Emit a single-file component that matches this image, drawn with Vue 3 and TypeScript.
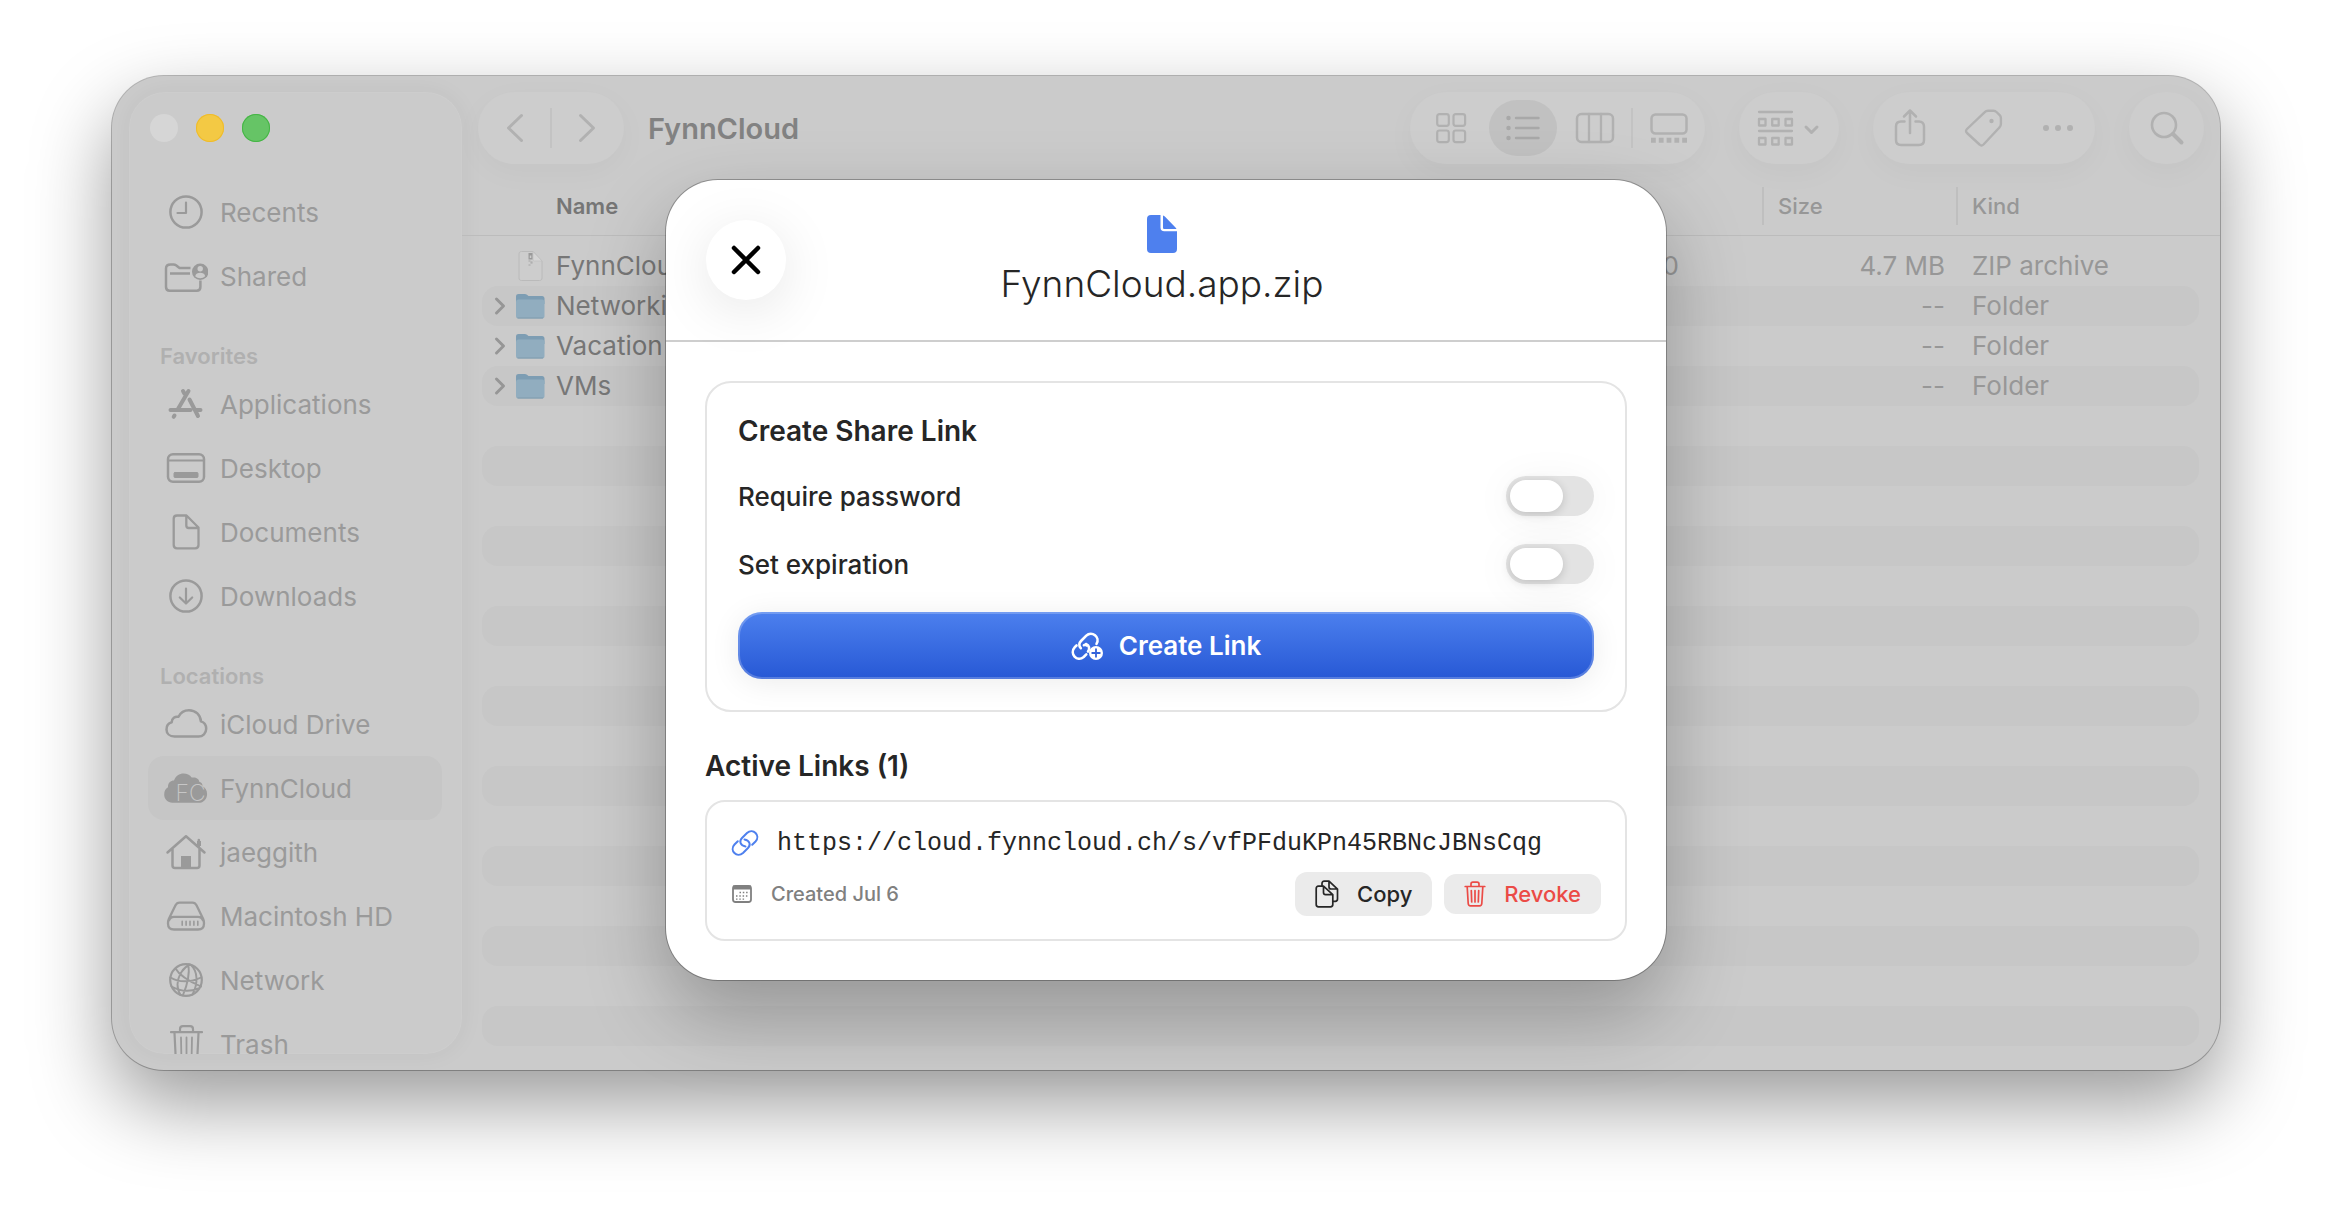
<script setup lang="ts">
import { ref } from 'vue'

interface Place { name: string; icon: string; active?: boolean }
interface Section { title?: string; places: Place[] }
interface Entry { name: string; folder: boolean; date: string; size: string; kind: string }

const sections: Section[] = [
  { places: [{ name: 'Recents', icon: 'clock' }, { name: 'Shared', icon: 'shared' }] },
  {
    title: 'Favorites',
    places: [
      { name: 'Applications', icon: 'apps' },
      { name: 'Desktop', icon: 'desktop' },
      { name: 'Documents', icon: 'doc' },
      { name: 'Downloads', icon: 'download' },
    ],
  },
  {
    title: 'Locations',
    places: [
      { name: 'iCloud Drive', icon: 'cloud' },
      { name: 'FynnCloud', icon: 'fynn', active: true },
      { name: 'jaeggith', icon: 'home' },
      { name: 'Macintosh HD', icon: 'disk' },
      { name: 'Network', icon: 'network' },
      { name: 'Trash', icon: 'trash' },
    ],
  },
]

const entries: Entry[] = [
  { name: 'FynnCloud.app.zip', folder: false, date: '0', size: '4.7 MB', kind: 'ZIP archive' },
  { name: 'Networking', folder: true, date: '', size: '--', kind: 'Folder' },
  { name: 'Vacation', folder: true, date: '', size: '--', kind: 'Folder' },
  { name: 'VMs', folder: true, date: '', size: '--', kind: 'Folder' },
]
const emptyRows = 16

const requirePassword = ref(false)
const setExpiration = ref(false)
const shareUrl = 'https://cloud.fynncloud.ch/s/vfPFduKPn45RBNcJBNsCqg'
</script>

<template>
  <div class="page">
    <div class="window">
      <aside class="sidebar">
        <div class="lights">
          <button class="light closed" aria-label="Close window"></button>
          <button class="light minimise" aria-label="Minimise window"></button>
          <button class="light maximise" aria-label="Zoom window"></button>
        </div>
        <nav>
          <section v-for="(section, s) in sections" :key="s">
            <h2 v-if="section.title">{{ section.title }}</h2>
            <a v-for="place in section.places" :key="place.name" href="#" class="place" :class="{ active: place.active }">
              <svg class="place-icon" width="44" height="40" viewBox="0 0 44 40" fill="none" stroke="currentColor" stroke-width="2.5" stroke-linecap="round" stroke-linejoin="round" aria-hidden="true">
                <g v-if="place.icon === 'clock'">
                  <circle cx="22" cy="20" r="15.6" /><path d="M22 10.500V21h-8.500" stroke-width="2.200" />
                </g>
                <g v-else-if="place.icon === 'shared'">
                  <path d="M26.500 12H15.500l-3.500-2.800c-.8-.6-1.500-.8-2.500-.8H6.500C3.500 8.400 2 10 2 12.500V31c0 2.500 1.200 3.700 3.700 3.700h27c2.500 0 3.700-1.200 3.700-3.700V24.500M6 17.600h20" stroke-linecap="butt" />
                  <circle cx="36.200" cy="15.800" r="8.200" fill="currentColor" stroke="none" />
                  <circle cx="36.200" cy="12.800" r="2.700" fill="#cbcbcb" stroke="none" />
                  <path d="M31.200 20.300c.6-2.600 2.600-3.500 5-3.500s4.400.9 5 3.500c-1.300 1.300-3 2-5 2s-3.700-.7-5-2z" fill="#cbcbcb" stroke="none" />
                </g>
                <g v-else-if="place.icon === 'apps'" stroke-width="4">
                  <path d="M19 7l1.500 2.700M24.500 7L14 25M6.500 26h20M32 26h4.500M25.500 15.500L34 32M10.500 31.500l-.8 1.300" />
                </g>
                <g v-else-if="place.icon === 'desktop'">
                  <rect x="4" y="6.200" width="36" height="27.600" rx="5" /><path d="M4 12.500h36" stroke-width="2" />
                  <rect x="10" y="24.500" width="24" height="5" rx="1" fill="currentColor" stroke-width="1" />
                </g>
                <g v-else-if="place.icon === 'doc'">
                  <path d="M13 3.500h9.500L34.500 15.500V33c0 2-1.200 3.300-3.300 3.300H13c-2.100 0-3.300-1.300-3.300-3.300V6.800c0-2.100 1.200-3.300 3.300-3.300zM22.300 4v9.500c0 1.700.8 2.500 2.500 2.500h9" stroke-width="2.300" />
                </g>
                <g v-else-if="place.icon === 'download'">
                  <circle cx="22" cy="20" r="15.600" /><path d="M22 12.500V27M15.800 21.500L22 27.500l6.200-6" stroke-width="2.200" />
                </g>
                <g v-else-if="place.icon === 'cloud'">
                  <path d="M10.500 32.500C5.500 32.500 2.500 29.400 2.500 25.400c0-3.400 2.100-6.200 5.200-7.100.1-3.900 3.400-6.300 6.800-5.500C16.500 8.600 20.500 6.200 25 6.200c6.600 0 11.700 4.900 11.900 11.200 3.300.9 5.300 3.900 5.300 7.400 0 4.400-3.300 7.700-7.700 7.700z" />
                </g>
                <g v-else-if="place.icon === 'fynn'">
                  <path d="M8.500 34.700C3.500 34.700.2 31 .2 26.500c0-3.600 1.400-6 3.800-7.200-.1-4.500 2.600-6.700 6-6.700C11.500 8 15.500 5.600 19.500 5.600c3.300 0 6.500 1.600 8.200 4 4-.8 7.300 1.200 7.600 4.200 2.500.6 3.400 2.700 3.100 4.500 3 1.200 4.700 4.200 4.700 7.600 0 5-3.500 8.800-8.300 8.800z" fill="currentColor" stroke="none" />
                  <text x="11.500" y="32.500" class="mark">FC</text>
                </g>
                <g v-else-if="place.icon === 'home'">
                  <path d="M3.500 20.500L22 4.200l18.500 16.300M8.500 17v16.500c0 1.700.8 2.500 2.500 2.500h22c1.700 0 2.500-.8 2.500-2.500V17M34.800 14.500V8" />
                  <path d="M17 24h10v12H17z" fill="currentColor" stroke="none" /><path d="M35 9v5" stroke-width="4" stroke-linecap="butt" />
                </g>
                <g v-else-if="place.icon === 'disk'">
                  <path d="M4 27.500c0-2 .2-3.200.8-4.500L11.500 9.300c1-2 2-2.700 4-2.700h13c2 0 3 .7 4 2.700L39.200 23c.6 1.300.8 2.500.8 4.500 0 4-2 6-6 6H10c-4 0-6-2-6-6zM5 24.500c.8-2.500 2.800-3.700 5-3.700h24c2.200 0 4.200 1.200 5 3.700" stroke-width="2.300" />
                  <path d="M18.200 25.300v4M22.100 25.300v4M26 25.300v4M29.900 25.300v4M33.800 25.300v4" stroke-width="1.600" />
                </g>
                <g v-else-if="place.icon === 'network'" stroke-width="1.900">
                  <circle cx="22" cy="20" r="15.800" stroke-width="2.200" />
                  <path d="M26 4.500c-6 2.500-12 10-12.500 20 0 4 1 7.500 3 10.500M24.500 4.500c1 8-1 20-5.500 30.500M27 5c6.500 6 7.500 18 1.500 29.500M11.500 8.500c2.500 4.500 9.500 11 25.500 18M6.500 17.500c8 5 20 5 30.500 0M7.500 26.500c8 4.500 18 5.500 27 2" />
                </g>
                <g v-else>
                  <path d="M7 8.200h31M16 8V5c0-1.900 1-2.900 2.900-2.900h7.200c1.900 0 2.900 1 2.900 2.900v3M10.500 9l1.500 31M34.500 9L33 40" stroke-width="2.200" />
                  <path d="M17 13.500l.5 26M22.500 13.500v26M28 13.500l-.5 26" stroke-width="1.800" />
                </g>
              </svg>
              <span>{{ place.name }}</span>
            </a>
          </section>
        </nav>
      </aside>

      <main class="content">
        <header class="toolbar">
          <div class="pill">
            <button class="tool" aria-label="Back">
              <svg width="20" height="30" viewBox="0 0 20 30" class="ic"><path d="M17.500 2.500l-13 12.500 13 12.500" stroke-width="3" /></svg>
            </button>
            <i class="bar"></i>
            <button class="tool" aria-label="Forward">
              <svg width="20" height="30" viewBox="0 0 20 30" class="ic"><path d="M2.500 2.500l13 12.500-13 12.500" stroke-width="3" /></svg>
            </button>
          </div>
          <h1>FynnCloud</h1>
          <div class="pill views">
            <button class="tool" aria-label="Icons">
              <svg width="32" height="32" viewBox="0 0 32 32" class="ic"><path d="M4.500 2.200h7c1.500 0 2.300.8 2.300 2.300v7c0 1.500-.8 2.300-2.300 2.300h-7c-1.500 0-2.300-.8-2.300-2.300v-7c0-1.500.8-2.300 2.300-2.300zM20.800 2.200h7c1.500 0 2.300.8 2.300 2.300v7c0 1.500-.8 2.300-2.300 2.300h-7c-1.500 0-2.300-.8-2.300-2.300v-7c0-1.500.8-2.300 2.300-2.300zM4.500 18.500h7c1.500 0 2.300.8 2.300 2.300v7c0 1.500-.8 2.300-2.300 2.300h-7c-1.500 0-2.300-.8-2.300-2.300v-7c0-1.500.8-2.300 2.300-2.300zM20.800 18.500h7c1.500 0 2.300.8 2.300 2.300v7c0 1.500-.8 2.300-2.300 2.300h-7c-1.500 0-2.300-.8-2.300-2.300v-7c0-1.500.8-2.300 2.300-2.300z" stroke-width="2.200" /></svg>
            </button>
            <button class="tool selected" aria-label="List">
              <svg width="34" height="26" viewBox="0 0 34 26" class="ic"><path d="M10 3h22.500M10 13h22.500M10 23h22.500" stroke-width="2.400" /><path d="M2.500 3h.01M2.500 13h.01M2.500 23h.01" stroke-width="4.500" /></svg>
            </button>
            <button class="tool" aria-label="Columns">
              <svg width="40" height="32" viewBox="0 0 40 32" class="ic"><rect x="2" y="2" width="36" height="28" rx="4.500" stroke-width="2.500" /><path d="M14 2v28M26 2v28" stroke-width="2.300" /></svg>
            </button>
            <i class="bar"></i>
            <button class="tool" aria-label="Gallery">
              <svg width="38" height="30" viewBox="0 0 38 30" class="ic"><rect x="1.500" y="1.500" width="35" height="19" rx="4" stroke-width="2.500" /><path d="M1 27.200h36" stroke-width="5" stroke-dasharray="4.800 3" stroke-linecap="butt" /></svg>
            </button>
          </div>
          <div class="pill">
            <button class="tool grouping" aria-label="Group items">
              <svg width="64" height="36" viewBox="0 0 64 36" class="ic">
                <path d="M2 2h33M2 21h33" stroke-width="2.300" />
                <path d="M2 9h6.500v6.500H2zM15.200 9h6.500v6.500h-6.500zM28.500 9H35v6.500h-6.500zM2 28h6.500v6.500H2zM15.200 28h6.500v6.500h-6.500zM28.500 28H35v6.500h-6.500z" stroke-width="2.300" />
                <path d="M49 17l5.500 5.500L60 17" stroke-width="3" />
              </svg>
            </button>
          </div>
          <div class="pill">
            <button class="tool wide" aria-label="Share">
              <svg width="32" height="40" viewBox="0 0 32 40" class="ic"><path d="M10.500 13.500H7c-3.200 0-5 1.800-5 5V32c0 3.200 1.800 5 5 5h18c3.200 0 5-1.800 5-5V18.500c0-3.200-1.800-5-5-5h-3.500M16 25V3M10 8.500L16 2.500l6 6" stroke-width="2.500" /></svg>
            </button>
            <button class="tool wide" aria-label="Tags">
              <svg width="40" height="40" viewBox="0 0 40 40" class="ic"><path d="M20.500 4.300c1.200-1.200 2.200-1.500 3.500-1.500h5.500c1.300 0 2.200.4 3 1.200l3.200 3.200c.8.800 1.200 1.700 1.200 3V16c0 1.500-.4 2.500-1.500 3.500L19.500 36.500c-1.300 1.300-2.700 1.300-4 0L3 25c-1.300-1.300-1.300-2.700 0-4z" stroke-width="2.400" /><circle cx="27.500" cy="13" r="2.200" fill="currentColor" stroke="none" /></svg>
            </button>
            <button class="tool wide" aria-label="More">
              <svg width="32" height="8" viewBox="0 0 32 8" class="ic"><path d="M4 4h.01M16 4h.01M28 4h.01" stroke-width="6" /></svg>
            </button>
          </div>
          <div class="pill">
            <button class="tool search" aria-label="Search">
              <svg width="36" height="36" viewBox="0 0 36 36" class="ic"><circle cx="15" cy="15" r="12" stroke-width="2.600" /><path d="M24 24l8.500 8.500" stroke-width="4" /></svg>
            </button>
          </div>
        </header>

        <div class="listing">
          <table>
            <colgroup>
              <col /><col class="c-date" /><col class="c-size" /><col class="c-kind" />
            </colgroup>
            <thead>
              <tr>
                <th scope="col" class="h-name">Name</th>
                <td></td>
                <th scope="col"><span class="split">Size</span></th>
                <th scope="col"><span class="split">Kind</span></th>
              </tr>
            </thead>
            <tbody>
              <tr v-for="entry in entries" :key="entry.name">
                <td>
                  <div class="file">
                    <svg class="disclosure" width="14" height="20" viewBox="0 0 14 20" fill="none" aria-hidden="true">
                      <path v-if="entry.folder" d="M3.500 3l7 7-7 7" stroke="#969696" stroke-width="3" stroke-linecap="round" stroke-linejoin="round" />
                    </svg>
                    <svg v-if="entry.folder" width="30" height="28" viewBox="0 0 30 28" aria-hidden="true">
                      <path d="M1 4.500C1 2.800 2 2 3.500 2h6.300c.9 0 1.500.2 2.200.8l1.500 1.200h13.500c1.500 0 2.500 1 2.500 2.500V12H1z" fill="#7d9db3" />
                      <rect x="1" y="7.500" width="28.500" height="19" rx="2.500" fill="#91adbf" />
                      <path d="M2.500 26h25.500" stroke="#7f9aac" />
                    </svg>
                    <svg v-else width="30" height="32" viewBox="0 0 30 32" aria-hidden="true">
                      <path d="M6.500 1.500H18L27 11v17c0 1.700-1 2.500-2.500 2.500h-18C5 30.500 4 29.700 4 28V4c0-1.700 1-2.500 2.500-2.500z" fill="#cdcdcd" stroke="#bababa" />
                      <path d="M18 1.500V9c0 1.500.7 2 2 2h7z" fill="#d6d6d6" stroke="#bfbfbf" stroke-width=".7" />
                      <path d="M13.500 3h4v6.500h-4z" fill="#9a9a9a" /><path d="M14.800 5.500h1.500v2.500h-1.500z" fill="#cdcdcd" />
                      <path d="M13.500 11h2M15.500 13h2M13.500 15h2M15.500 12h2" stroke="#a5a5a5" />
                    </svg>
                    <span>{{ entry.name }}</span>
                  </div>
                </td>
                <td class="num date">{{ entry.date }}</td>
                <td class="num">{{ entry.size }}</td>
                <td class="kind">{{ entry.kind }}</td>
              </tr>
              <tr v-for="n in emptyRows" :key="'empty' + n" aria-hidden="true">
                <td></td><td></td><td></td><td></td>
              </tr>
            </tbody>
          </table>
        </div>
      </main>

      <div class="overlay">
        <div class="modal" role="dialog" aria-modal="true" aria-labelledby="share-title">
          <header class="modal-head">
            <button class="close" aria-label="Close">
              <svg width="32" height="32" viewBox="0 0 32 32" fill="none" stroke="#000" stroke-width="4.500" stroke-linecap="round"><path d="M4 4l24 24M28 4L4 28" /></svg>
            </button>
            <div class="heading">
              <svg width="30" height="38" viewBox="0 0 30 38" fill="#4e80ee" aria-hidden="true">
                <path d="M4 0h9.500v12.500c0 2.500 1.300 3.800 3.800 3.800H30V34c0 2.700-1.300 4-4 4H4c-2.700 0-4-1.300-4-4V4c0-2.700 1.300-4 4-4z" />
                <path d="M16 .5c.8.300 1.500.8 2.300 1.600L28 12c.7.700 1.200 1.300 1.500 2H17.500c-1 0-1.500-.5-1.500-1.500z" />
              </svg>
              <h2 id="share-title">FynnCloud.app.zip</h2>
            </div>
          </header>

          <div class="modal-body">
            <section class="card create">
              <h3>Create Share Link</h3>
              <div class="option">
                <label for="require-password">Require password</label>
                <input id="require-password" v-model="requirePassword" type="checkbox" role="switch" class="switch" />
              </div>
              <div class="option">
                <label for="set-expiration">Set expiration</label>
                <input id="set-expiration" v-model="setExpiration" type="checkbox" role="switch" class="switch" />
              </div>
              <button class="primary">
                <svg width="32" height="30" viewBox="0 0 32 30" fill="none" stroke="#fff" stroke-width="2.600" stroke-linecap="round" aria-hidden="true">
                  <path d="M15.500 14.500c-.6-.8-1.700-1-2.600-.3M9.800 17.200c-2.200-2.500-1.500-5.400.2-7.200l5.300-5.300c5.500-5.300 14.300 1.500 10.200 8.200" />
                  <path d="M15 13c3.500 1.500 4 5 2 7.500M5.500 14.500l-1.700 1.700C-2 22.500 6 31.500 12.700 26l2.600-2.600" />
                  <circle cx="25" cy="22" r="7" fill="#fff" stroke="none" />
                  <path d="M25 18.200v7.600M21.200 22h7.600" stroke="#3262da" stroke-width="1.800" />
                </svg>
                Create Link
              </button>
            </section>

            <h3 class="active-title">Active Links (1)</h3>
            <section class="card link">
              <div class="url-row">
                <svg width="28" height="28" viewBox="0 0 28 28" fill="none" stroke="#4e80ee" stroke-width="2" stroke-linecap="round" aria-hidden="true">
                  <path d="M14.500 17.500c-5.500-1-6.500-5.500-3.500-8.500l5-5c6-5.500 14 2.500 8.500 8.500l-3.300 3.300" />
                  <path d="M13.500 10.500c5.500 1 6.500 5.500 3.500 8.500l-5 5c-6 5.500-14-2.500-8.500-8.500l3.300-3.300" />
                </svg>
                <a class="url" :href="shareUrl">{{ shareUrl }}</a>
              </div>
              <div class="meta-row">
                <svg width="22" height="20" viewBox="0 0 22 20" fill="none" stroke="#808080" aria-hidden="true">
                  <rect x="2" y="2" width="18" height="16" rx="2.500" stroke-width="1.800" /><path d="M2 3.500h18" stroke-width="4" />
                  <path d="M8.500 8.500h10M5 12h13M5 15.200h9.500" stroke-width="1.300" stroke-dasharray="1.500 1.800" />
                </svg>
                <span class="created">Created Jul 6</span>
                <button class="small copy">
                  <svg width="24" height="28" viewBox="0 0 24 28" fill="none" stroke="currentColor" stroke-width="1.700" stroke-linejoin="round" aria-hidden="true">
                    <path d="M7 6V3.500C7 2 7.800 1.200 9.300 1.200H14l8.500 8V19c0 1.500-.8 2.300-2.300 2.300h-2.500M14 1.500V7c0 1.300.6 2 2 2h6" />
                    <path d="M8.500 6.200H3.400C2 6.200 1.200 7 1.200 8.500v16c0 1.500.8 2.300 2.300 2.300h12c1.500 0 2.300-.8 2.300-2.300v-9.800zM8.500 6.500v6c0 1.300.8 2.100 2.100 2.100h7" />
                  </svg>
                  Copy
                </button>
                <button class="small revoke">
                  <svg width="22" height="26" viewBox="0 0 22 26" fill="none" stroke="currentColor" stroke-width="1.700" stroke-linecap="round" stroke-linejoin="round" aria-hidden="true">
                    <path d="M1.200 5.500h19.600M7 5V3c0-1.200.7-1.900 1.900-1.900h4.200c1.200 0 1.900.7 1.900 1.900v2M3.200 6l1 16.500c.1 1.500.9 2.300 2.300 2.300h9c1.400 0 2.200-.8 2.300-2.300l1-16.500M7.300 9.500l.4 11.500M11 9.500V21M14.700 9.500L14.300 21" />
                  </svg>
                  Revoke
                </button>
              </div>
            </section>
          </div>
        </div>
      </div>
    </div>
  </div>
</template>

<style>
body {
  margin: 0;
  background: #fff;
}
</style>

<style scoped>
* {
  box-sizing: border-box;
}
.page {
  min-height: 100vh;
  padding: 76px 112px 148px;
  font-family: Inter, "Liberation Sans", sans-serif;
}
button {
  border: 0;
  padding: 0;
  margin: 0;
  background: none;
  color: inherit;
  font: inherit;
}
h1, h2, h3 {
  margin: 0;
}
.window {
  position: relative;
  display: flex;
  height: calc(100vh - 224px);
  border-radius: 52px;
  background: #cbcbcb;
  box-shadow: 0 0 0 1px rgba(0, 0, 0, 0.26), 0 34px 80px rgba(0, 0, 0, 0.4);
}

/* Sidebar */
.sidebar {
  flex: none;
  width: 333px;
  margin: 16px 0 16px 17px;
  padding: 22px 20px 0 19px;
  overflow: hidden;
  border-radius: 36px;
  background: #cbcbcb;
  box-shadow: 0 0 24px rgba(0, 0, 0, 0.05), inset 0 0 0 1px rgba(255, 255, 255, 0.05);
}
.lights {
  display: flex;
  gap: 18px;
  padding: 0 2px;
  margin-bottom: 38px;
}
.light {
  width: 28px;
  height: 28px;
  border-radius: 50%;
}
.closed {
  background: #d6d6d6;
}
.minimise {
  background: #f3c944;
  box-shadow: inset 0 0 0 1px #eebb2c;
}
.maximise {
  background: #66c466;
  box-shadow: inset 0 0 0 1px #45b545;
}
.sidebar h2 {
  height: 64px;
  padding: 32px 0 0 12px;
  font-size: 22px;
  line-height: 32px;
  font-weight: 600;
  color: #b0b0b0;
}
.place {
  display: flex;
  align-items: center;
  gap: 12px;
  height: 64px;
  padding-left: 16px;
  border-radius: 16px;
  font-size: 26px;
  color: #9a9a9a;
  text-decoration: none;
}
.place.active {
  background: #c6c6c6;
}
.place-icon {
  flex: none;
}
.mark {
  font-size: 23px;
  font-weight: 200;
  fill: #c6c6c6;
  stroke: none;
}

/* Toolbar */
.content {
  flex: 1;
  min-width: 0;
  display: flex;
  flex-direction: column;
  overflow: hidden;
  border-radius: 0 52px 52px 0;
}
.toolbar {
  flex: none;
  display: flex;
  align-items: center;
  gap: 34px;
  padding: 16px 16px 12px;
}
.toolbar h1 {
  flex: 1;
  margin-left: -10px;
  font-size: 29px;
  font-weight: 600;
  color: #828282;
}
.pill {
  display: flex;
  align-items: center;
  height: 72px;
  border-radius: 36px;
  background: #cdcdcd;
  box-shadow: 0 8px 32px rgba(0, 0, 0, 0.03);
  color: #b1b1b1;
}
.views {
  padding-left: 5px;
}
.bar {
  width: 2px;
  height: 40px;
  background: #c3c3c3;
}
.tool {
  display: grid;
  place-items: center;
  width: 72px;
  height: 56px;
}
.selected {
  width: 68px;
  margin: 0 2px;
  border-radius: 28px;
  background: #c1c1c1;
  color: #a8a8a8;
}
.grouping {
  width: 100px;
}
.wide {
  width: 74px;
}
.search {
  width: 75px;
}
.ic {
  fill: none;
  stroke: currentColor;
  stroke-linecap: round;
  stroke-linejoin: round;
}

/* File list */
.listing {
  flex: 1;
  min-height: 0;
  overflow: hidden;
  padding: 0 21px 0 20px;
  background: linear-gradient(#bcbcbc, #bcbcbc) 0 59px / 100% 1px no-repeat;
}
table {
  width: 100%;
  table-layout: fixed;
  border-collapse: separate;
  border-spacing: 0;
}
.c-date {
  width: 330px;
}
.c-size {
  width: 194px;
}
.c-kind {
  width: 243px;
}
thead tr {
  height: 60px;
}
th {
  padding: 0;
  text-align: left;
  font-size: 22px;
  font-weight: 500;
  color: #979797;
}
th.h-name {
  padding-left: 74px;
  font-weight: 600;
  color: #767676;
}
.split {
  display: block;
  border-left: 2px solid #bfbfbf;
  padding-left: 14px;
  line-height: 38px;
}
tbody::before {
  content: "";
  display: block;
  height: 10px;
}
tbody td {
  height: 40px;
  padding: 0;
  font-size: 26px;
  line-height: 40px;
  white-space: nowrap;
  color: #979797;
}
tbody tr:nth-child(even) td {
  background: #c7c7c7;
}
tbody td:first-child {
  border-radius: 16px 0 0 16px;
}
tbody td:last-child {
  border-radius: 0 16px 16px 0;
}
.file {
  display: flex;
  align-items: center;
  height: 40px;
  padding-left: 11px;
  color: #777;
}
.disclosure {
  margin-right: 8px;
}
.file span {
  margin-left: 11px;
}
tbody .num {
  text-align: right;
  padding-right: 11px;
}
tbody .date {
  padding-right: 83px;
}
tbody .kind {
  padding-left: 16px;
}

/* Share dialog */
.overlay {
  position: absolute;
  inset: 0;
  display: flex;
  justify-content: center;
  align-items: flex-start;
  padding-top: 104px;
}
.modal {
  width: 90%;
  max-width: 1000px;
  border-radius: 52px;
  background: #fff;
  box-shadow: 0 0 0 1px rgba(0, 0, 0, 0.28), 0 34px 80px rgba(0, 0, 0, 0.27);
  color: #262626;
}
.modal-head {
  display: flex;
  align-items: center;
  padding: 33px 128px 33px 40px;
  border-bottom: 2px solid #cecece;
}
.close {
  flex: none;
  display: grid;
  place-items: center;
  width: 80px;
  height: 80px;
  border-radius: 50%;
  background: #fff;
  box-shadow: 0 10px 56px rgba(0, 0, 0, 0.1);
}
.heading {
  flex: 1;
  display: flex;
  flex-direction: column;
  align-items: center;
  gap: 8px;
  padding-top: 2px;
}
.heading h2 {
  font-size: 37px;
  line-height: 46px;
  font-weight: 300;
}
.modal-body {
  padding: 39px;
}
.card {
  display: flex;
  flex-direction: column;
  border: 2px solid #e4e4e4;
}
h3 {
  font-size: 28px;
  line-height: 34px;
  font-weight: 600;
}
.create {
  gap: 28px;
  padding: 31px;
  border-radius: 26px;
}
.option {
  display: flex;
  align-items: center;
  justify-content: space-between;
  font-size: 26px;
  font-weight: 500;
}
.switch {
  appearance: none;
  width: 88px;
  height: 40px;
  margin: 0;
  padding: 4px;
  border-radius: 20px;
  background: #e3e3e3;
  box-shadow: 0 4px 40px rgba(0, 0, 0, 0.05);
}
.switch::before {
  content: "";
  display: block;
  width: 53px;
  height: 32px;
  border-radius: 16px;
  background: #fff;
  box-shadow: 0 2px 10px rgba(0, 0, 0, 0.16);
}
.switch:checked::before {
  margin-left: auto;
}
.primary {
  display: flex;
  align-items: center;
  justify-content: center;
  gap: 16px;
  height: 67px;
  border-radius: 24px;
  background: linear-gradient(#4c80ee, #2758d5);
  box-shadow: inset 0 0 0 2px rgba(255, 255, 255, 0.22), 0 4px 30px rgba(0, 0, 0, 0.08);
  color: #fff;
  font-size: 26px;
  font-weight: 600;
}
.active-title {
  margin: 37px 0 17px;
}
.link {
  gap: 13px;
  padding: 25px 24px 23px;
  border-radius: 20px;
}
.url-row {
  display: flex;
  align-items: center;
  gap: 18px;
  height: 32px;
}
.url {
  font-family: "Liberation Mono", monospace;
  font-size: 25px;
  color: inherit;
  text-decoration: none;
}
.meta-row {
  display: flex;
  align-items: center;
  gap: 12px;
  height: 44px;
}
.created {
  flex: 1;
  margin-left: 6px;
  font-size: 20px;
  font-weight: 500;
  color: #808080;
}
.small {
  display: flex;
  align-items: center;
  gap: 18px;
  height: 44px;
  padding: 0 20px;
  border-radius: 12px;
  background: #ebebeb;
  font-size: 22px;
  font-weight: 500;
}
.revoke {
  height: 40px;
  color: #eb4b46;
}
</style>
